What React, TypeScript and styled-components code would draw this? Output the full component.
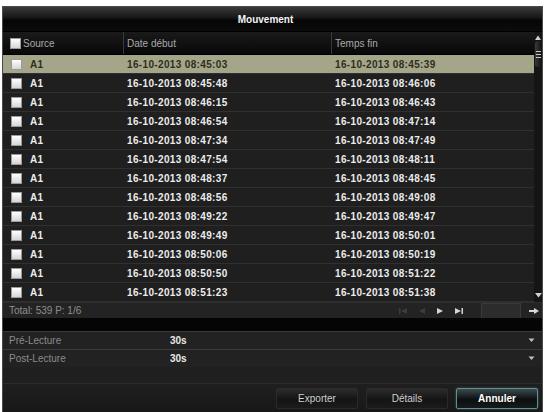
import React from "react";
import styled, { createGlobalStyle, css } from "styled-components";

const GlobalStyle = createGlobalStyle`
  html, body {
    margin: 0;
    padding: 0;
    background: #ffffff;
  }
  body {
    font-family: "Liberation Sans", Arial, sans-serif;
  }
`;

type Record = { source: string; start: string; end: string };

const records: Record[] = [
  { source: "A1", start: "16-10-2013 08:45:03", end: "16-10-2013 08:45:39" },
  { source: "A1", start: "16-10-2013 08:45:48", end: "16-10-2013 08:46:06" },
  { source: "A1", start: "16-10-2013 08:46:15", end: "16-10-2013 08:46:43" },
  { source: "A1", start: "16-10-2013 08:46:54", end: "16-10-2013 08:47:14" },
  { source: "A1", start: "16-10-2013 08:47:34", end: "16-10-2013 08:47:49" },
  { source: "A1", start: "16-10-2013 08:47:54", end: "16-10-2013 08:48:11" },
  { source: "A1", start: "16-10-2013 08:48:37", end: "16-10-2013 08:48:45" },
  { source: "A1", start: "16-10-2013 08:48:56", end: "16-10-2013 08:49:08" },
  { source: "A1", start: "16-10-2013 08:49:22", end: "16-10-2013 08:49:47" },
  { source: "A1", start: "16-10-2013 08:49:49", end: "16-10-2013 08:50:01" },
  { source: "A1", start: "16-10-2013 08:50:06", end: "16-10-2013 08:50:19" },
  { source: "A1", start: "16-10-2013 08:50:50", end: "16-10-2013 08:51:22" },
  { source: "A1", start: "16-10-2013 08:51:23", end: "16-10-2013 08:51:38" },
];

const COLS = "120px 208px 1fr";

const Page = styled.div`
  padding: 6px 2px 0 2px;
`;

const Window = styled.div`
  height: 406px;
  box-sizing: border-box;
  display: flex;
  flex-direction: column;
  background: #1f1f1f;
  border: 1px solid #4a4a4a;
  border-bottom: none;
`;

const TitleBar = styled.div`
  height: 24px;
  display: flex;
  align-items: center;
  justify-content: center;
  background: linear-gradient(#3a3a3a 0%, #161616 45%, #050505 55%, #0c0c0c 100%);
  border-bottom: 1px solid #000;
  color: #f4f4f4;
  font-size: 10px;
  font-weight: bold;
  padding-right: 14px;
`;

const TableArea = styled.div`
  display: grid;
  grid-template-columns: 1fr 8px;
`;

const Table = styled.div`
  display: flex;
  flex-direction: column;
`;

const HeaderRow = styled.div`
  display: grid;
  grid-template-columns: ${COLS};
  height: 22px;
  background: linear-gradient(#1a1a1a, #080808);
  border-bottom: 1px solid #000;
`;

const HeaderCell = styled.div<{ $first?: boolean }>`
  display: flex;
  align-items: center;
  gap: 2px;
  padding-left: ${(p) => (p.$first ? "7px" : "3px")};
  color: #a9a9a9;
  font-size: 10px;
  border-left: ${(p) => (p.$first ? "none" : "1px solid #383838")};
`;

const Row = styled.div<{ $selected?: boolean }>`
  display: grid;
  grid-template-columns: ${COLS};
  height: 18px;
  align-items: center;
  font-size: 10px;
  letter-spacing: 0.35px;
  font-weight: bold;
  border-bottom: 1px solid #303030;
  ${(p) =>
    p.$selected
      ? css`
          background: #a5a689;
          color: #2d2f1c;
        `
      : css`
          background: #1f1f1f;
          color: #ececec;
        `}
`;

const Cell = styled.div<{ $pad: number }>`
  display: flex;
  align-items: center;
  gap: 8px;
  padding-left: ${(p) => p.$pad}px;
`;

const Box = styled.span`
  width: 9px;
  height: 9px;
  background: linear-gradient(#ffffff, #d6d6d6);
  border: 1px solid #9a9a9a;
  flex: none;
`;

const ScrollTrack = styled.div`
  background: #151515;
  display: flex;
  flex-direction: column;
  align-items: center;
  padding: 3px 0 4px;
`;

const ScrollThumb = styled.div`
  width: 7px;
  height: 26px;
  border-radius: 3px;
  background: linear-gradient(90deg, #3a3a3a, #101010);
  display: flex;
  flex-direction: column;
  justify-content: center;
  align-items: center;
  gap: 2px;
  margin-top: 1px;
  span {
    width: 5px;
    height: 1px;
    background: #c8c8c8;
  }
`;

const ScrollSpacer = styled.div`
  flex: 1;
`;

const Arrow = styled.svg`
  display: block;
  flex: none;
`;

const PagerBar = styled.div`
  height: 15px;
  display: flex;
  align-items: center;
  background: #232323;
  padding-left: 6px;
  color: #8f8f8f;
  font-size: 10px;
  border-top: 1px solid #2e2e2e;
`;

const PagerControls = styled.div`
  margin-left: auto;
  display: flex;
  align-items: center;
  gap: 12px;
  height: 100%;
`;

const PageInput = styled.div`
  width: 40px;
  height: 19px;
  align-self: flex-start;
  background: #2c2c2c;
  border: 1px solid #3a3a3a;
  box-sizing: border-box;
  margin-left: 6px;
`;

const BlackBand = styled.div`
  height: 13px;
  background: #050505;
`;

const SettingRow = styled.div`
  display: grid;
  grid-template-columns: 163px 1fr 14px;
  height: 17px;
  align-items: center;
  background: #222;
  border-top: 1px solid #3a3a3a;
  font-size: 10px;
`;

const SettingLabel = styled.div`
  padding-left: 6px;
  color: #8a8a8a;
`;

const SettingValue = styled.div`
  color: #e8e8e8;
  font-weight: bold;
  padding-left: 4px;
`;

const Footer = styled.div`
  margin-top: auto;
  border-top: 1px solid #2c2c2c;
  display: flex;
  justify-content: flex-end;
  gap: 8px;
  padding: 4px 4px 3px 0;
  background: linear-gradient(#1f1f1f, #181818);
`;

const Button = styled.div<{ $primary?: boolean }>`
  width: 82px;
  height: 21px;
  display: flex;
  align-items: center;
  justify-content: center;
  font-size: 10px;
  box-sizing: border-box;
  border-radius: 2px;
  ${(p) =>
    p.$primary
      ? css`
          color: #ffffff;
          font-weight: bold;
          background: linear-gradient(#3d4a4c, #0c0f10 55%, #161a1a);
          border: 1px solid #5f8e95;
          box-shadow: 0 0 2px #3d6f76;
        `
      : css`
          color: #cfcfcf;
          background: linear-gradient(#2c2c2c, #141414 55%, #1b1b1b);
          border: 1px solid #2a2a2a;
        `}
`;

const Caret = () => (
  <Arrow width="7" height="5" viewBox="0 0 7 5">
    <path d="M0.5 0.5 L3.5 4 L6.5 0.5 Z" fill="#bdbdbd" />
  </Arrow>
);

export default function App() {
  return (
    <>
      <GlobalStyle />
      <Page>
        <Window>
          <TitleBar>Mouvement</TitleBar>
          <TableArea>
            <Table>
              <HeaderRow>
                <HeaderCell $first>
                  <Box />
                  Source
                </HeaderCell>
                <HeaderCell>Date début</HeaderCell>
                <HeaderCell>Temps fin</HeaderCell>
              </HeaderRow>
              {records.map((r, i) => (
                <Row key={r.start} $selected={i === 0}>
                  <Cell $pad={8}>
                    <Box />
                    {r.source}
                  </Cell>
                  <Cell $pad={4}>{r.start}</Cell>
                  <Cell $pad={4}>{r.end}</Cell>
                </Row>
              ))}
            </Table>
            <ScrollTrack>
              <Arrow width="6" height="5" viewBox="0 0 6 5">
                <path d="M0 5 L3 0.5 L6 5 Z" fill="#d0d0d0" />
              </Arrow>
              <ScrollThumb>
                <span />
                <span />
                <span />
              </ScrollThumb>
              <ScrollSpacer />
              <Arrow width="7" height="5" viewBox="0 0 7 5">
                <path d="M0 0 L3.5 4.5 L7 0 Z" fill="#d0d0d0" />
              </Arrow>
            </ScrollTrack>
          </TableArea>
          <PagerBar>
            Total: 539 P: 1/6
            <PagerControls>
              <Arrow width="8" height="6" viewBox="0 0 8 6">
                <rect x="0" y="0" width="1.5" height="6" fill="#3c3c3c" />
                <path d="M8 0 L2 3 L8 6 Z" fill="#3c3c3c" />
              </Arrow>
              <Arrow width="6" height="6" viewBox="0 0 6 6">
                <path d="M6 0 L0 3 L6 6 Z" fill="#3c3c3c" />
              </Arrow>
              <Arrow width="6" height="6" viewBox="0 0 6 6">
                <path d="M0 0 L6 3 L0 6 Z" fill="#d6d6d6" />
              </Arrow>
              <Arrow width="8" height="6" viewBox="0 0 8 6">
                <path d="M0 0 L6 3 L0 6 Z" fill="#d6d6d6" />
                <rect x="6.5" y="0" width="1.5" height="6" fill="#d6d6d6" />
              </Arrow>
              <PageInput />
              <Arrow width="10" height="6" viewBox="0 0 10 6" style={{ marginRight: 3, marginLeft: -4 }}>
                <rect x="0" y="2" width="6" height="2" fill="#d6d6d6" />
                <path d="M5 0 L10 3 L5 6 Z" fill="#d6d6d6" />
              </Arrow>
            </PagerControls>
          </PagerBar>
          <BlackBand />
          <SettingRow>
            <SettingLabel>Pré-Lecture</SettingLabel>
            <SettingValue>30s</SettingValue>
            <Caret />
          </SettingRow>
          <SettingRow>
            <SettingLabel>Post-Lecture</SettingLabel>
            <SettingValue>30s</SettingValue>
            <Caret />
          </SettingRow>
          <Footer>
            <Button>Exporter</Button>
            <Button>Détails</Button>
            <Button $primary>Annuler</Button>
          </Footer>
        </Window>
      </Page>
    </>
  );
}
